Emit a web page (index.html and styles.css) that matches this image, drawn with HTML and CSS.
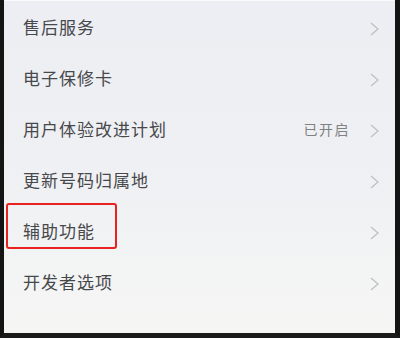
FILE: index.html
```html
<!DOCTYPE html>
<html lang="zh-CN">
<head>
<meta charset="utf-8">
<title>设置</title>
<link rel="stylesheet" href="styles.css">
</head>
<body>
<div class="frame">
  <div class="screen">
    <ul class="list">
      <li class="row"><span class="label">售后服务</span><span class="right"><svg class="chev" viewBox="0 0 9 14"><path d="M1 1 L8 7 L1 13"/></svg></span></li>
      <li class="row"><span class="label">电子保修卡</span><span class="right"><svg class="chev" viewBox="0 0 9 14"><path d="M1 1 L8 7 L1 13"/></svg></span></li>
      <li class="row"><span class="label">用户体验改进计划</span><span class="right"><span class="status">已开启</span><svg class="chev" viewBox="0 0 9 14"><path d="M1 1 L8 7 L1 13"/></svg></span></li>
      <li class="row"><span class="label">更新号码归属地</span><span class="right"><svg class="chev" viewBox="0 0 9 14"><path d="M1 1 L8 7 L1 13"/></svg></span></li>
      <li class="row"><span class="label">辅助功能</span><span class="right"><svg class="chev" viewBox="0 0 9 14"><path d="M1 1 L8 7 L1 13"/></svg></span></li>
      <li class="row"><span class="label">开发者选项</span><span class="right"><svg class="chev" viewBox="0 0 9 14"><path d="M1 1 L8 7 L1 13"/></svg></span></li>
    </ul>
    <div class="highlight"></div>
  </div>
</div>
</body>
</html>
```

FILE: styles.css
```css
html, body {
  margin: 0;
  padding: 0;
  background: #111;
}
.frame {
  width: 400px;
  height: 338px;
  box-sizing: border-box;
  border-left: 4px solid #141414;
  border-right: 5px solid #141414;
  border-bottom: 5px solid #1a1a1a;
  overflow: hidden;
}
.screen {
  position: relative;
  height: 100%;
  box-sizing: border-box;
  border-top: 1px solid #fafafa;
  background: linear-gradient(180deg, #eceef3 0%, #eff0f3 50%, #f5f6f4 100%);
  font-family: "Noto Sans CJK SC", "Noto Sans", sans-serif;
}
.list {
  list-style: none;
  margin: 0;
  padding: 0;
}
.row {
  height: 51px;
  display: flex;
  align-items: center;
  justify-content: space-between;
  padding: 0 16px 0 19px;
}
.label {
  font-size: 17px;
  letter-spacing: 1px;
  color: #47484b;
}
.right {
  display: flex;
  align-items: center;
  gap: 20px;
}
.status {
  font-size: 14px;
  letter-spacing: 1.5px;
  color: #808184;
}
.chev {
  width: 9px;
  height: 14px;
  margin-top: 4px;
}
.chev path {
  fill: none;
  stroke: #c0c1c5;
  stroke-width: 1.4;
}
.highlight {
  position: absolute;
  left: 2px;
  top: 202px;
  width: 111px;
  height: 46px;
  box-sizing: border-box;
  border: 2px solid #e8221e;
  border-radius: 3px;
}
```
